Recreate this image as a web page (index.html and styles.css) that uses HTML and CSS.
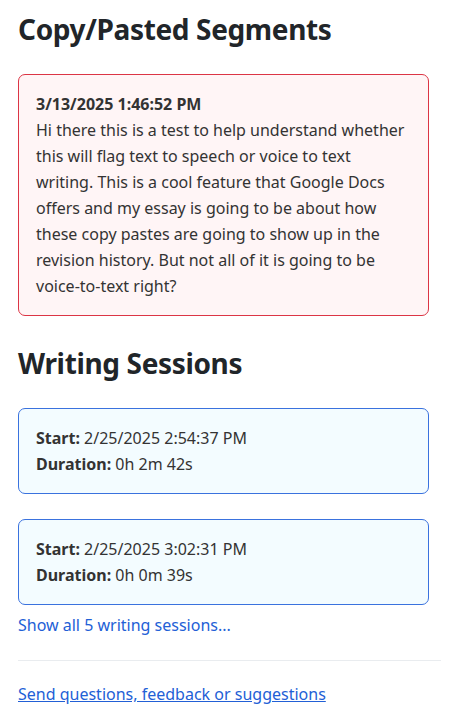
FILE: index.html
```html
<!DOCTYPE html>
<html lang="en">
<head>
<meta charset="utf-8">
<title>Revision report</title>
<link rel="stylesheet" href="styles.css">
</head>
<body>
<main class="page">
  <section class="section">
    <h2 class="section-title">Copy/Pasted Segments</h2>
    <div class="card card-paste">
      <div class="card-date">3/13/2025 1:46:52 PM</div>
      <div class="card-text">Hi there this is a test to help understand whether this will flag text to speech or voice to text writing. This is a cool feature that Google Docs offers and my essay is going to be about how these copy pastes are going to show up in the revision history. But not all of it is going to be voice-to-text right?</div>
    </div>
  </section>
  <section class="section">
    <h2 class="section-title">Writing Sessions</h2>
    <div class="card card-session">
      <div><span class="label">Start:</span> 2/25/2025 2:54:37 PM</div>
      <div><span class="label">Duration:</span> 0h 2m 42s</div>
    </div>
    <div class="card card-session">
      <div><span class="label">Start:</span> 2/25/2025 3:02:31 PM</div>
      <div><span class="label">Duration:</span> 0h 0m 39s</div>
    </div>
    <a class="show-all" href="#">Show all 5 writing sessions...</a>
  </section>
  <hr class="divider">
  <a class="feedback" href="#">Send questions, feedback or suggestions</a>
</main>
</body>
</html>
```
FILE: styles.css
```css
html, body {
  margin: 0;
  padding: 0;
  background: #ffffff;
}
body {
  font-family: "Noto Sans", "Open Sans", sans-serif;
  font-size: 16px;
  line-height: 26px;
  color: #212529;
}
.page {
  padding: 11px 19px 20px 18px;
}
.section-title {
  font-size: 28px;
  line-height: 36px;
  font-weight: 700;
  letter-spacing: -0.35px;
  margin: 0 0 27px 0;
  color: #212529;
}
.card {
  margin-right: 12px;
  border-radius: 7px;
  padding: 16px 17px;
  color: #333333;
}
.card-paste {
  border: 1px solid #dc3545;
  background: #fff5f6;
  margin-bottom: 29px;
}
.card-date {
  font-weight: 700;
}
.card-session {
  border: 1px solid #3a72de;
  background: #f3fcff;
  margin-bottom: 25px;
}
.label {
  font-weight: 700;
}
.show-all {
  display: block;
  color: #2260d6;
  text-decoration: none;
}
.card-session + .show-all {
  margin-top: -18px;
}
.divider {
  border: 0;
  border-top: 1px solid #e9ecef;
  margin: 22px 0 20px 0;
}
.feedback {
  color: #2260d6;
  text-decoration: underline;
}
```
